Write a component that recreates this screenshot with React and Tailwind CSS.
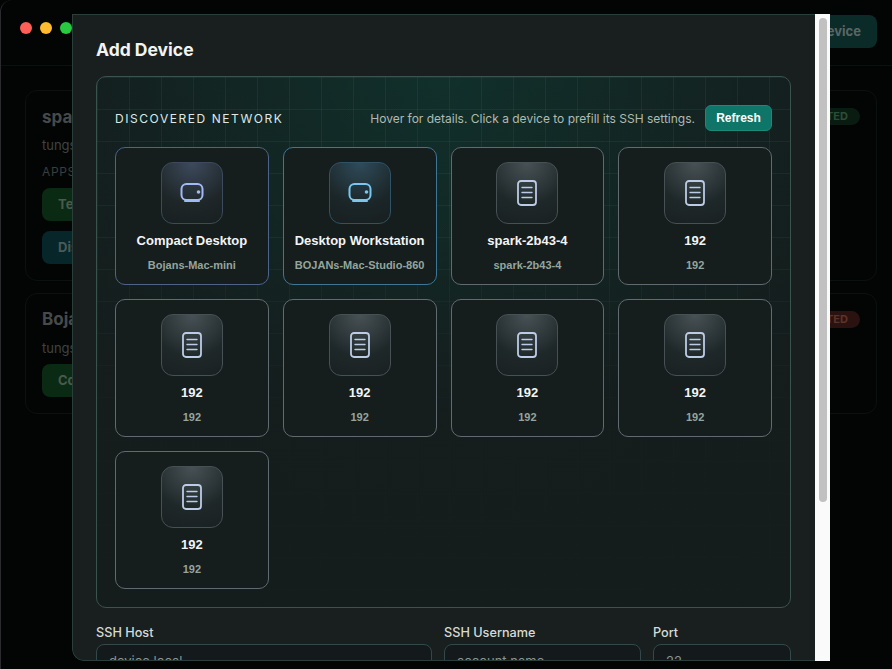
import React from 'react';

const devices = [
  { title: 'Compact Desktop', sub: 'Bojans-Mac-mini', kind: 'mini' },
  { title: 'Desktop Workstation', sub: 'BOJANs-Mac-Studio-860', kind: 'studio' },
  { title: 'spark-2b43-4', sub: 'spark-2b43-4', kind: 'doc' },
  { title: '192', sub: '192', kind: 'doc' },
  { title: '192', sub: '192', kind: 'doc' },
  { title: '192', sub: '192', kind: 'doc' },
  { title: '192', sub: '192', kind: 'doc' },
  { title: '192', sub: '192', kind: 'doc' },
  { title: '192', sub: '192', kind: 'doc' },
];

const cardStyles = {
  mini: {
    card: 'border-[#4d6488]',
    tile: 'border-[#3b4a5c] bg-[radial-gradient(circle_at_50%_0%,#3d4a5c_0%,#1e2628_62%,#181f20_100%)]',
    icon: '#a3b9f5',
  },
  studio: {
    card: 'border-[#3f7695]',
    tile: 'border-[#2f5266] bg-[radial-gradient(circle_at_50%_0%,#2f4b5a_0%,#1b2628_62%,#181f20_100%)]',
    icon: '#79c6ef',
  },
  doc: {
    card: 'border-[#5f6b70]',
    tile: 'border-[#475054] bg-[radial-gradient(circle_at_50%_0%,#485256_0%,#1f2829_62%,#192021_100%)]',
    icon: '#bccbe6',
  },
};

// small desktop box with a status dot and a stand line
const BoxIcon = ({ color }) => (
  <svg width="26" height="22" viewBox="0 0 26 22" fill="none">
    <rect x="2.5" y="2" width="21" height="16" rx="5" stroke={color} strokeWidth="2" />
    <path d="M6 19H20" stroke={color} strokeWidth="2" strokeLinecap="round" />
    <circle cx="19.5" cy="10" r="1.8" fill={color} />
  </svg>
);

const DocIcon = ({ color }) => (
  <svg width="20" height="26" viewBox="0 0 20 26" fill="none">
    <rect x="1" y="1" width="18" height="24" rx="3" stroke={color} strokeWidth="1.8" />
    <path d="M5 7.5H15M5 12.5H15M5 17.5H15" stroke={color} strokeWidth="1.4" strokeLinecap="round" />
  </svg>
);

const DeviceCard = ({ device }) => {
  const s = cardStyles[device.kind];
  return (
    <div className={`flex h-[138px] flex-col items-center rounded-[10px] border bg-[#161d1d] pt-[14px] ${s.card}`}>
      <div className={`flex h-[62px] w-[62px] items-center justify-center rounded-xl border ${s.tile}`}>
        {device.kind === 'doc' ? <DocIcon color={s.icon} /> : <BoxIcon color={s.icon} />}
      </div>
      <div className="mt-[9px] text-[13px] leading-[16px] font-bold text-[#f2f5f5] font-['Liberation_Sans',sans-serif]">{device.title}</div>
      <div className="mt-[9px] text-[11px] leading-[14px] font-bold text-[#94a59d] font-['Liberation_Sans',sans-serif]">{device.sub}</div>
    </div>
  );
};

const Field = ({ label, placeholder }) => (
  <div>
    <div className="text-[12.7px] leading-[16px] font-medium text-[#d5dbd8]">{label}</div>
    <div className="mt-[3px] h-[40px] rounded-lg border border-[#34474a] bg-[#141a1b] px-3 py-[8px] text-[13px] leading-[16px] text-[#8b9492]">
      {placeholder}
    </div>
  </div>
);

// dimmed page behind the dialog
const BackgroundPage = () => (
  <div className="h-[669px] overflow-hidden rounded-tl-xl border-l border-[#2b2b2e] bg-[#030505] font-['Inter',sans-serif]">
    <div className="flex h-[66px] items-start justify-between border-b border-[#0c100f] pr-[15px] pl-[19px]">
      <div className="flex gap-[8px] pt-[22px]">
        <div className="h-3 w-3 rounded-full bg-[#ff5f57]" />
        <div className="h-3 w-3 rounded-full bg-[#febc2e]" />
        <div className="h-3 w-3 rounded-full bg-[#28c840]" />
      </div>
      <div className="mt-[15px] flex h-[33px] items-center rounded-lg bg-[#0a2b27] px-4 text-[13px] font-bold text-[#5a6664]">Add Device</div>
    </div>
    <div className="flex flex-col gap-[12px] pt-[24px] pr-[15px] pl-[24px]">
      <div className="h-[191px] rounded-xl border border-[#0c100f] px-4 pt-[14px]">
        <div className="flex items-start justify-between">
          <div className="text-[17px] leading-[24px] font-bold text-[#474a4a]">spark-2b43-4</div>
          <div className="mt-[3px] rounded-full bg-[#0a1c12] px-3 py-[1px] text-[11px] leading-[15px] font-bold text-[#2a4d38]">CONNECTED</div>
        </div>
        <div className="mt-[6px] text-[13px] leading-[20px] text-[#3f4342]">tungsten</div>
        <div className="mt-[8px] text-[12px] leading-[18px] tracking-wider text-[#3a3e3d]">APPS</div>
        <div className="mt-[7px] flex h-[33px] w-[80px] items-center rounded-lg bg-[#0b2a13] px-4 text-[13px] font-bold text-[#4a5a4e]">Terminal</div>
        <div className="mt-[10px] flex h-[33px] w-[80px] items-center rounded-lg bg-[#07262a] px-4 text-[13px] font-bold text-[#4a5a58]">Display</div>
      </div>
      <div className="h-[121px] rounded-xl border border-[#0c100f] px-4 pt-[13px]">
        <div className="flex items-start justify-between">
          <div className="text-[17px] leading-[24px] font-bold text-[#474a4a]">Bojans-Mac-mini</div>
          <div className="mt-[4px] rounded-full bg-[#2a1210] px-3 py-[1px] text-[11px] leading-[15px] font-bold text-[#5d3229]">DISCONNECTED</div>
        </div>
        <div className="mt-[7px] text-[13px] leading-[20px] text-[#3f4342]">tungsten</div>
        <div className="mt-[6px] flex h-[33px] w-[80px] items-center rounded-lg bg-[#0b2a13] px-4 text-[13px] font-bold text-[#4a5a4e]">Connect</div>
      </div>
    </div>
  </div>
);

const App = () => {
  return (
    <div className="relative h-[669px] w-[892px] overflow-hidden bg-[#030505]">
      <BackgroundPage />

      {/* Dialog */}
      <div className="absolute top-[14px] left-[72px] flex h-[647px] w-[758px] overflow-hidden rounded-bl-xl font-['Inter',sans-serif]">
        <div className="h-full flex-1 overflow-hidden rounded-bl-xl border border-r-0 border-[#2b3f3a] bg-[#191f1f] pt-[22px] pr-[24px] pl-[23px]">
          <h2 className="text-[17.5px] leading-[26px] font-bold text-[#f1f4f3]">Add Device</h2>

          <div className="mt-[13px] rounded-[10px] border border-[#3a534c] bg-[linear-gradient(180deg,rgba(21,28,28,0)_0%,rgba(21,28,28,0.15)_30%,rgba(21,28,28,0.9)_65%,rgba(21,28,28,0.96)_100%),linear-gradient(rgba(120,190,170,0.08)_1px,transparent_1px),linear-gradient(90deg,rgba(120,190,170,0.08)_1px,transparent_1px),radial-gradient(ellipse_at_50%_0%,#11302b_0%,#13201f_70%,#151c1c_100%)] [background-size:100%_100%,32px_32px,32px_32px,100%_100%] px-[18px] pt-[28px] pb-[18px]">
            <div className="flex items-center justify-between">
              <div className="pt-px text-[12px] leading-[16px] font-normal tracking-[0.13em] text-[#dfe8e4]">DISCOVERED NETWORK</div>
              <div className="flex items-center gap-[10px]">
                <span className="pt-px text-[12px] leading-[16px] text-[#aebbb5]">Hover for details. Click a device to prefill its SSH settings.</span>
                <button className="flex h-[26px] w-[67px] items-center justify-center rounded-md border border-[#1c8a79] bg-[#0f7568] text-[12px] font-bold text-white font-['Liberation_Sans',sans-serif]">
                  Refresh
                </button>
              </div>
            </div>

            <div className="mt-[16px] grid grid-cols-4 gap-[14px]">
              {devices.map((d, i) => (
                <DeviceCard key={i} device={d} />
              ))}
            </div>
          </div>

          <div className="mt-[17px] grid grid-cols-[336px_197px_138px] gap-[12px]">
            <Field label="SSH Host" placeholder="device.local" />
            <Field label="SSH Username" placeholder="account.name" />
            <Field label="Port" placeholder="22" />
          </div>
        </div>

        {/* Scrollbar */}
        <div className="h-full w-[15px] shrink-0 bg-[#fafafa] px-[4px] pt-[4px]">
          <div className="h-[484px] w-[8px] rounded-full bg-[#c1c1c1]" />
        </div>
      </div>
    </div>
  );
};

export default App;
